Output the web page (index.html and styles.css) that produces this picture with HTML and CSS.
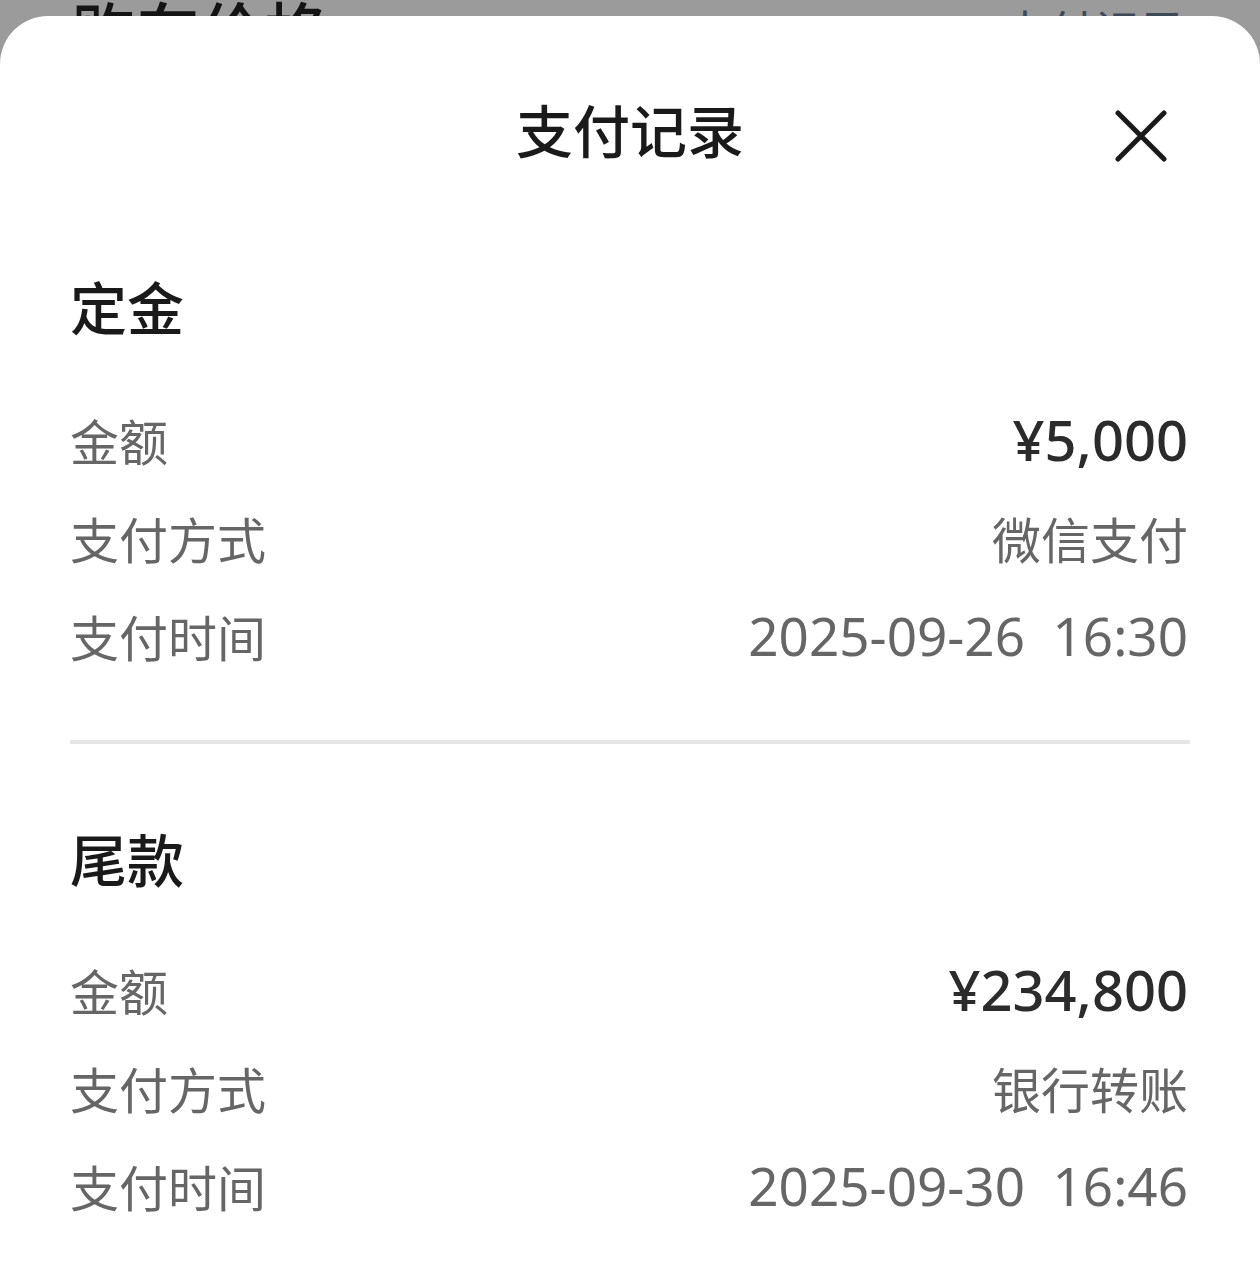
FILE: index.html
```html
<!DOCTYPE html>
<html lang="zh-CN">
  <head>
    <meta charset="UTF-8" />
    <meta name="viewport" content="width=device-width, initial-scale=1.0" />
    <title>支付记录</title>
    <link rel="stylesheet" href="styles.css">
  </head>
  <body>
    <div class="backdrop">
      <span class="backdrop-title">购车价格</span>
      <span class="backdrop-link">支付记录</span>
    </div>

    <div class="sheet">
      <div class="sheet-header">
        <span></span>
        <h1 class="sheet-title">支付记录</h1>
        <button class="close" aria-label="关闭">
          <svg width="52" height="52" viewBox="0 0 52 52">
            <path d="M3 3 L49 49 M49 3 L3 49" stroke="#1a1a1a" stroke-width="5" stroke-linecap="round" fill="none" />
          </svg>
        </button>
      </div>

      <section class="record">
        <h2 class="record-title">定金</h2>
        <div class="row">
          <span class="label">金额</span>
          <span class="value amount">¥5,000</span>
        </div>
        <div class="row">
          <span class="label">支付方式</span>
          <span class="value">微信支付</span>
        </div>
        <div class="row">
          <span class="label">支付时间</span>
          <span class="value time">2025-09-26&nbsp;&nbsp;16:30</span>
        </div>
      </section>

      <hr class="divider" />

      <section class="record second">
        <h2 class="record-title">尾款</h2>
        <div class="row">
          <span class="label">金额</span>
          <span class="value amount">¥234,800</span>
        </div>
        <div class="row">
          <span class="label">支付方式</span>
          <span class="value">银行转账</span>
        </div>
        <div class="row">
          <span class="label">支付时间</span>
          <span class="value time">2025-09-30&nbsp;&nbsp;16:46</span>
        </div>
      </section>
    </div>
  </body>
</html>
```

FILE: styles.css
```css
body {
  margin: 0;
  padding: 0;
  background-color: #9b9b9b;
  font-family: "Noto Sans", "Noto Sans CJK SC", sans-serif;
  height: 1285px;
  overflow: hidden;
}

.backdrop {
  height: 16px;
  overflow: hidden;
  display: flex;
  justify-content: space-between;
  align-items: flex-start;
  padding: 0 74px 0 72px;
}

.backdrop-title {
  font-family: "Noto Sans CJK SC", sans-serif;
  font-size: 64px;
  line-height: 64px;
  font-weight: 500;
  color: #141414;
  margin-top: -4px;
}

.backdrop-link {
  font-family: "Noto Sans CJK SC", sans-serif;
  font-size: 46px;
  line-height: 46px;
  color: #3f4856;
  margin-top: 6px;
}

.sheet {
  background-color: #fff;
  border-radius: 48px 48px 0 0;
  padding: 0 70px;
  height: 1269px;
}

.sheet-header {
  height: 230px;
  display: grid;
  grid-template-columns: 1fr auto 1fr;
  align-items: center;
}

.sheet-title {
  margin: 0 0 6px;
  font-family: "Noto Sans CJK SC", sans-serif;
  font-size: 57px;
  font-weight: 500;
  color: #1a1a1a;
  line-height: 70px;
}

.close {
  justify-self: end;
  margin: 10px 23px 0 0;
  padding: 0;
  border: none;
  background: none;
  width: 52px;
  height: 52px;
  display: block;
}

.record {
  padding-top: 24px;
}

.record.second {
  padding-top: 78px;
}

.record-title {
  margin: 0 0 50px;
  font-family: "Noto Sans CJK SC", sans-serif;
  font-size: 57px;
  font-weight: 500;
  line-height: 70px;
  color: #1a1a1a;
}

.record.second .record-title {
  margin-bottom: 48px;
}

.row {
  display: flex;
  justify-content: space-between;
  align-items: center;
  height: 98px;
}

.label {
  font-family: "Noto Sans CJK SC", sans-serif;
  font-size: 49px;
  color: #666;
}

.value {
  font-size: 49px;
  color: #666;
  white-space: nowrap;
  margin-right: 2px;
}

.value.time {
  font-size: 53px;
}

.value.amount {
  font-size: 56px;
  color: #2b2b2b;
  font-weight: 500;
}

.divider {
  margin: 56px 0 0;
  border: none;
  height: 4px;
  background-color: #e6e6e6;
}
```
